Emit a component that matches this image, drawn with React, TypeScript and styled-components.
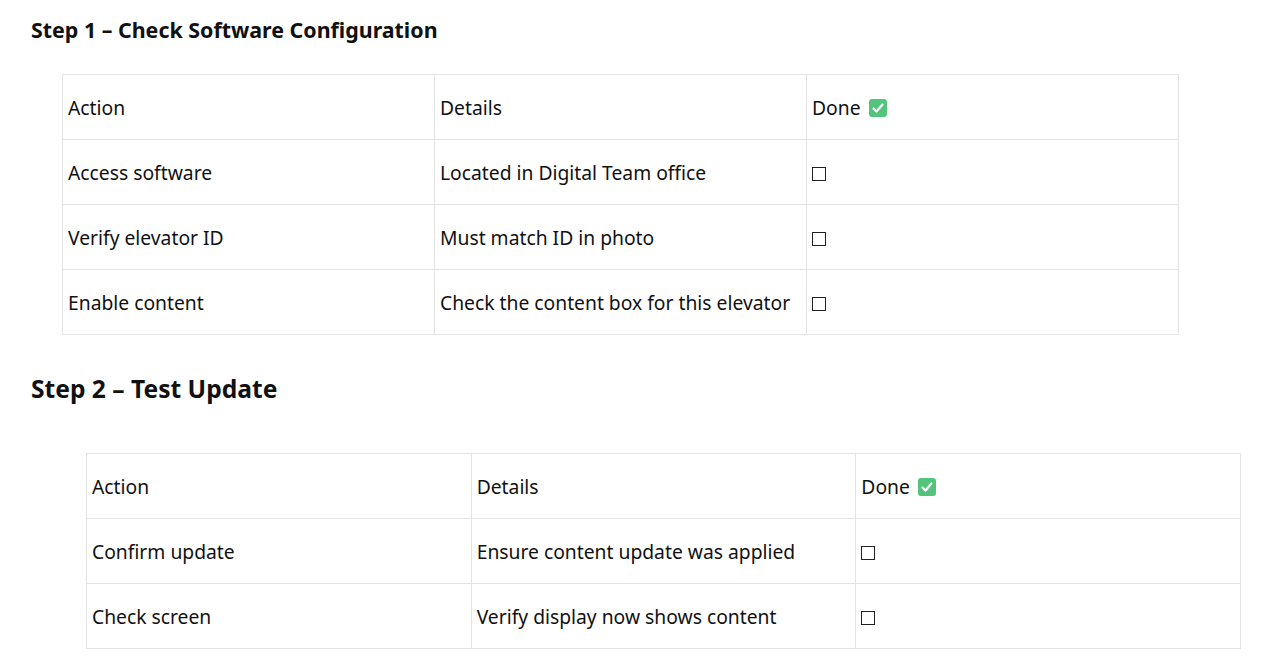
import styled, { createGlobalStyle } from 'styled-components';

const Global = createGlobalStyle`
  body { margin: 0; background: #fff; font-family: "Noto Sans", "Open Sans", sans-serif; color: #111; }
`;

const Page = styled.div`
  padding: 14px 0 0 31px;
`;

const Heading = styled.h2<{ $size: number; $after: number }>`
  margin: 0 0 ${(p) => p.$after}px 0;
  font-size: ${(p) => p.$size}px;
  font-weight: 700;
  line-height: 32px;
`;

const Table = styled.table<{ $left: number; $width: number }>`
  margin-left: ${(p) => p.$left}px;
  width: ${(p) => p.$width}px;
  border-collapse: collapse;
  table-layout: fixed;
  font-size: 19.3px;
`;

const Cell = styled.td`
  border: 1px solid #e3e3e3;
  height: 64px;
  padding: 0 5px;
  vertical-align: middle;
  white-space: nowrap;
`;

const Box = styled.span`
  display: inline-block;
  width: 12px;
  height: 12px;
  border: 1.5px solid #222;
  vertical-align: -1px;
`;

const Check = () => (
  <svg width="20" height="20" viewBox="0 0 20 20" style={{ verticalAlign: -3, marginLeft: 7 }}>
    <rect x="1" y="1" width="18" height="18" rx="3" fill="#52c47b" />
    <path d="M5.5 10.5 L8.5 13.5 L14.5 6.5" stroke="#fff" strokeWidth="2.2" fill="none" strokeLinecap="round" strokeLinejoin="round" />
  </svg>
);

type Row = [string, string];

function StepTable({ rows, left, width }: { rows: Row[]; left: number; width: number }) {
  return (
    <Table $left={left} $width={width}>
      <tbody>
        <tr>
          <Cell>Action</Cell>
          <Cell>Details</Cell>
          <Cell>Done<Check /></Cell>
        </tr>
        {rows.map(([a, d]) => (
          <tr key={a}>
            <Cell>{a}</Cell>
            <Cell>{d}</Cell>
            <Cell><Box /></Cell>
          </tr>
        ))}
      </tbody>
    </Table>
  );
}

export default function App() {
  return (
    <Page>
      <Global />
      <Heading $size={21.4} $after={28}>Step 1 – Check Software Configuration</Heading>
      <StepTable
        left={31}
        width={1117}
        rows={[
          ['Access software', 'Located in Digital Team office'],
          ['Verify elevator ID', 'Must match ID in photo'],
          ['Enable content', 'Check the content box for this elevator'],
        ]}
      />
      <div style={{ height: 38 }} />
      <Heading $size={24.6} $after={48}>Step 2 – Test Update</Heading>
      <StepTable
        left={55}
        width={1155}
        rows={[
          ['Confirm update', 'Ensure content update was applied'],
          ['Check screen', 'Verify display now shows content'],
        ]}
      />
    </Page>
  );
}
